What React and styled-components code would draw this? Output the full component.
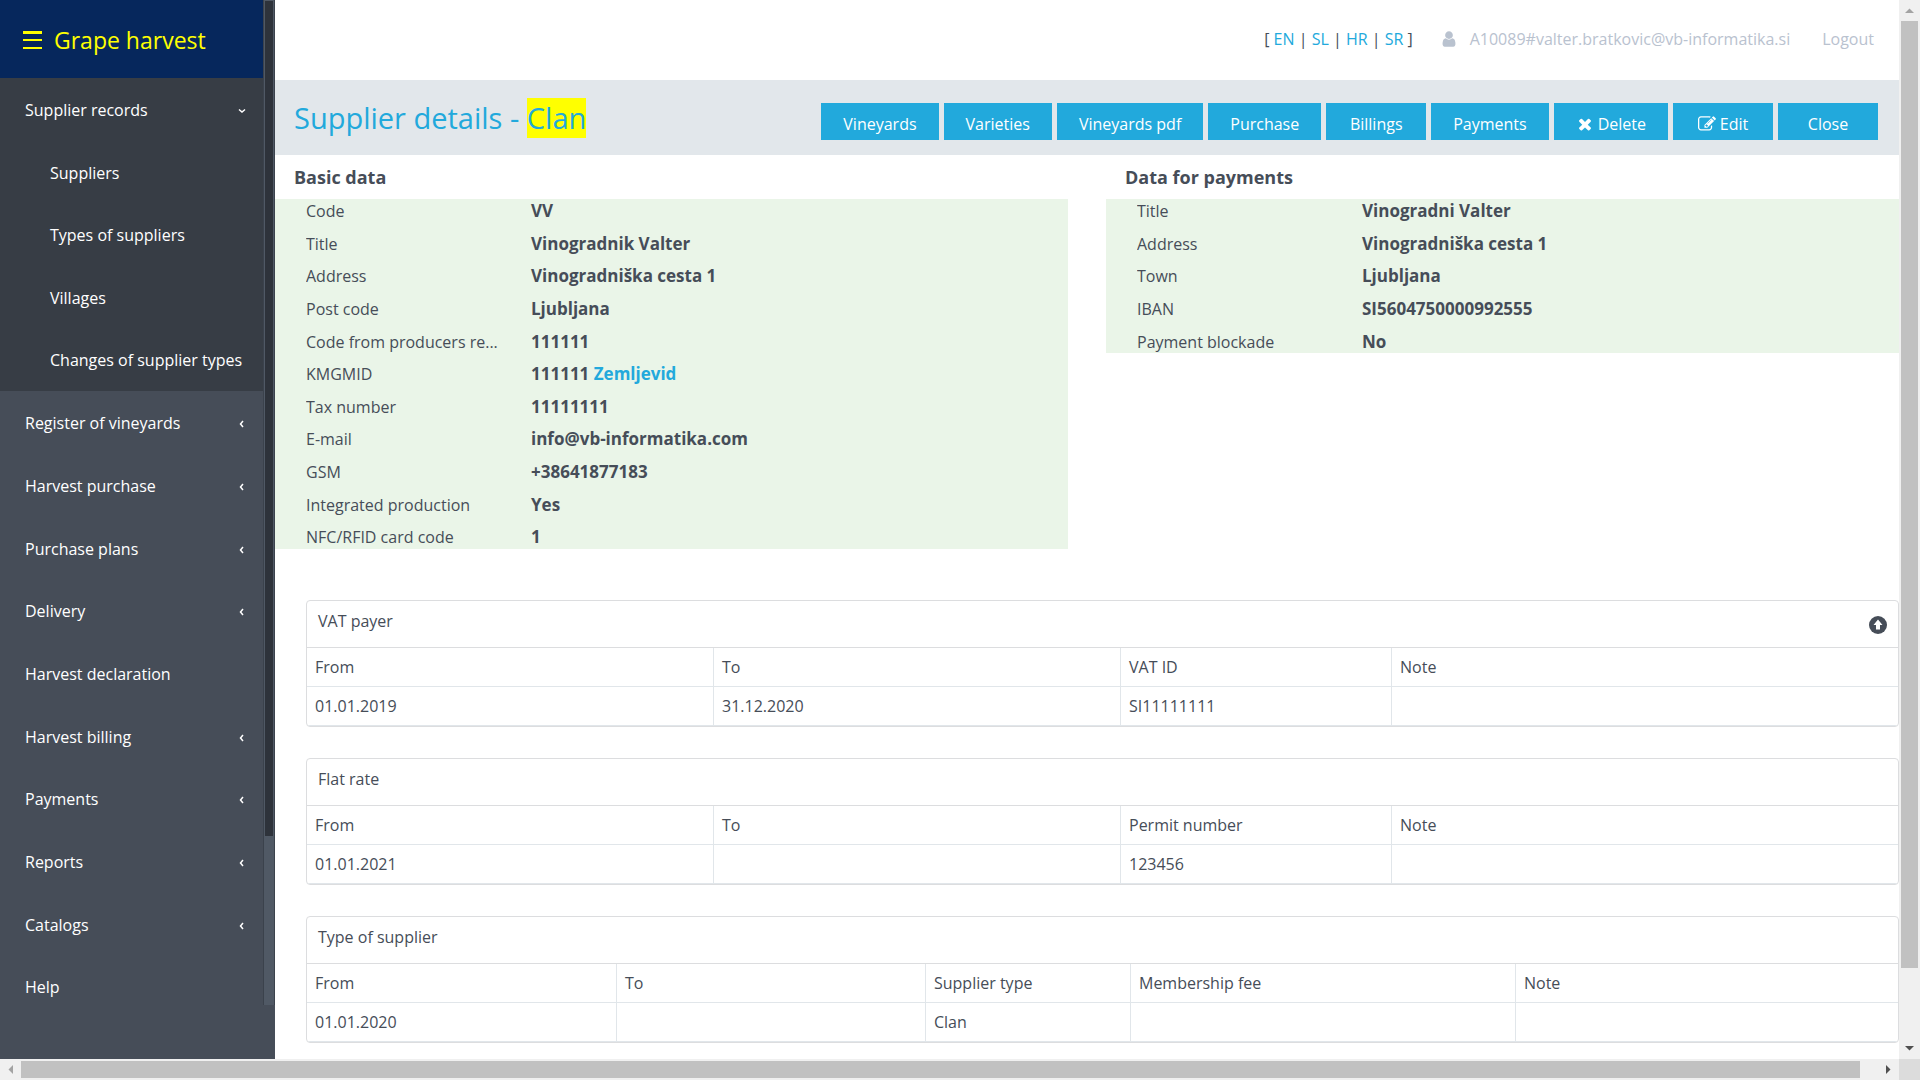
import React from "react";
import styled, { createGlobalStyle } from "styled-components";

const GlobalStyle = createGlobalStyle`
  *, *::before, *::after { box-sizing: border-box; }
  body {
    margin: 0;
    background: #fff;
    color: #464d58;
    font-family: "Open Sans", "Noto Sans", sans-serif;
    font-size: 16px;
    line-height: 24px;
  }
  a { text-decoration: none; }
`;

/* ---------- window frame ---------- */

const Window = styled.div`
  display: grid;
  grid-template-columns: minmax(0, 1fr) 21px;
  grid-template-rows: minmax(0, 1fr) 21px;
  height: 100vh;
  overflow: hidden;
`;

const Page = styled.div`
  display: flex;
  min-width: 0;
  overflow: hidden;
`;

const ScrollTrack = styled.div`
  display: flex;
  flex-direction: ${(p) => (p.$vertical ? "column" : "row")};
  align-items: center;
  background: #f0f0f0;
`;

const ScrollArrow = styled.span`
  display: flex;
  flex: 0 0 21px;
  align-items: center;
  justify-content: center;
`;

const ScrollThumb = styled.div`
  flex: ${(p) => p.$grow} 0 0;
  align-self: stretch;
  margin: ${(p) => (p.$vertical ? "0 2px" : "2px 0")};
  background: #c1c1c1;
`;

const ScrollRest = styled.div`
  flex: ${(p) => p.$grow} 0 0;
`;

const Corner = styled.div`
  background: #dcdcdc;
`;

/* ---------- sidebar ---------- */

const Sidebar = styled.aside`
  display: flex;
  flex: 0 0 275px;
  background: #464d58;
`;

const SidebarBody = styled.div`
  flex: 1;
`;

const Brand = styled.div`
  display: flex;
  align-items: center;
  gap: 12px;
  height: 78px;
  padding: 2px 0 0 23px;
  background: #06275c;
  color: #ffff00;
  font-size: 23px;
  line-height: 32px;
`;

const MenuButton = styled.button`
  display: flex;
  padding: 0;
  border: 0;
  background: none;
  color: inherit;
`;

const Menu = styled.ul`
  display: flex;
  flex-direction: column;
  min-height: 940px;
  margin: 0;
  padding: 0;
  list-style: none;
`;

const MenuItem = styled.li`
  display: flex;
  flex-direction: column;
  flex: ${(p) => p.$rows || 1} 0 0;
  background: ${(p) => (p.$open ? "#373d45" : "transparent")};
`;

const SubMenu = styled.ul`
  display: flex;
  flex-direction: column;
  flex: 4 0 0;
  margin: 0;
  padding: 0;
  list-style: none;
`;

const MenuLink = styled.a`
  display: flex;
  flex: 1 0 0;
  align-items: center;
  justify-content: space-between;
  padding: ${(p) => (p.$nested ? "0 0 0 50px" : "1px 16px 0 25px")};
  color: #fff;
  white-space: nowrap;
`;

const SideTrack = styled.div`
  flex: 0 0 12px;
  height: 1005px;
  padding: 1px 1px 0;
  border-left: 1px solid #3b424c;
  border-right: 1px solid #3b424c;
  background: #505965;
`;

const SideThumb = styled.div`
  height: 835px;
  background: #2e333b;
`;

/* ---------- main ---------- */

const Main = styled.main`
  flex: 1;
  min-width: 0;
`;

const TopBar = styled.header`
  display: flex;
  align-items: center;
  justify-content: flex-end;
  height: 80px;
  padding: 0 25px 2px 0;
`;

const Languages = styled.nav`
  margin-right: 27px;
  a { color: #22a9dc; }
`;

const User = styled.span`
  display: flex;
  align-items: center;
  gap: 12px;
  margin-right: 32px;
  color: #b9c2cf;
`;

const Logout = styled.a`
  color: #b9c2cf;
`;

const TitleBar = styled.div`
  display: flex;
  align-items: center;
  justify-content: space-between;
  height: 75px;
  padding: 0 21px 0 19px;
  background: #e2e7eb;
`;

const Title = styled.h1`
  margin: 0;
  color: #22a9dc;
  font-size: 29px;
  font-weight: 400;
  line-height: 40px;
  mark {
    display: inline-block;
    background: #ffff00;
    color: inherit;
  }
`;

const Actions = styled.div`
  display: flex;
  gap: 5px;
  padding-top: 8px;
`;

const Action = styled.button`
  display: flex;
  align-items: center;
  justify-content: center;
  gap: 4px;
  min-width: 100px;
  height: 37px;
  padding: 4px 22px 0;
  border: 0;
  background: #22a9dc;
  color: #fff;
  font: inherit;
`;

const Panels = styled.div`
  display: grid;
  grid-template-columns: 1fr 1fr;
  column-gap: 38px;
  align-items: start;
`;

const PanelTitle = styled.h2`
  margin: 0;
  padding: 10px 19px;
  font-size: 18px;
  line-height: 24px;
`;

const DataList = styled.dl`
  display: flex;
  flex-direction: column;
  gap: 9px;
  margin: 0;
  padding: 0 0 0 31px;
  background: #eaf5e8;
  font-size: 17px;
  line-height: 1.39;
`;

const DataRow = styled.div`
  display: grid;
  grid-template-columns: 225px 1fr;
  align-items: baseline;
`;

const Term = styled.dt`
  overflow: hidden;
  font-size: 16px;
  white-space: nowrap;
`;

const Value = styled.dd`
  margin: 0;
  font-weight: 700;
  a { color: #22a9dc; }
`;

const Cards = styled.div`
  display: flex;
  flex-direction: column;
  gap: 31px;
  padding: 51px 0 0 31px;
`;

const Card = styled.section`
  overflow: hidden;
  border: 1px solid #dcdddf;
  border-radius: 4px;
`;

const CardHead = styled.header`
  display: flex;
  align-items: center;
  justify-content: space-between;
  height: 47px;
  padding: 0 11px;
  border-bottom: 1px solid #dcdddf;
`;

const CardTitle = styled.h3`
  margin: 0;
  padding-bottom: 6px;
  font-size: 16px;
  font-weight: 400;
`;

const IconButton = styled.button`
  display: flex;
  padding: 2px 0 0;
  border: 0;
  background: none;
  color: inherit;
`;

const Table = styled.table`
  width: 100%;
  table-layout: fixed;
  border-collapse: separate;
  border-spacing: 0;
`;

const cell = `
  height: 39px;
  padding: 0 8px;
  border-bottom: 1px solid #e1e6ea;
  font-weight: 400;
  text-align: left;
  &:not(:last-child) { border-right: 1px solid #e1e6ea; }
`;

const HeadCell = styled.th`
  width: ${(p) => p.$share}%;
  ${cell}
`;

const Cell = styled.td`
  ${cell}
`;

/* ---------- icons ---------- */

const Glyph = ({ size, d }) => (
  <svg width={size} height={size} viewBox="0 0 1792 1792" fill="currentColor" aria-hidden="true">
    <path d={d} />
  </svg>
);

const USER =
  "M1536 1399q0 109-62.5 187t-150.5 78h-854q-88 0-150.5-78t-62.5-187q0-85 8.5-160.5t31.5-152 58.5-131 94-89 134.5-34.5q131 128 313 128t313-128q76 0 134.5 34.5t94 89 58.5 131 31.5 152 8.5 160.5zm-256-887q0 159-112.5 271.5t-271.5 112.5-271.5-112.5-112.5-271.5 112.5-271.5 271.5-112.5 271.5 112.5 112.5 271.5z";
const TIMES =
  "M1490 1322q0 40-28 68l-136 136q-28 28-68 28t-68-28l-294-294-294 294q-28 28-68 28t-68-28l-136-136q-28-28-28-68t28-68l294-294-294-294q-28-28-28-68t28-68l136-136q28-28 68-28t68 28l294 294 294-294q28-28 68-28t68 28l136 136q28 28 28 68t-28 68l-294 294 294 294q28 28 28 68z";
const EDIT =
  "M888 1184l116-116-152-152-116 116v56h96v96h56zm440-720q-16-16-33 1l-350 350q-17 17-1 33t33-1l350-350q17-17 1-33zm80 594v190q0 119-84.5 203.5t-203.5 84.5h-832q-119 0-203.5-84.5t-84.5-203.5v-832q0-119 84.5-203.5t203.5-84.5h832q63 0 117 25 15 7 18 23 3 17-9 29l-49 49q-14 14-32 8-23-6-45-6h-832q-66 0-113 47t-47 113v832q0 66 47 113t113 47h832q66 0 113-47t47-113v-126q0-13 9-22l64-64q15-15 35-7t20 29zm-96-738l288 288-672 672h-288v-288zm444 132l-92 92-288-288 92-92q28-28 68-28t68 28l152 152q28 28 28 68t-28 68z";

const CircleArrowUp = () => (
  <svg width="18" height="18" viewBox="0 0 18 18" aria-hidden="true">
    <circle cx="9" cy="9" r="9" fill="currentColor" />
    <path d="M9 3.500 13.500 9H11v4.500H7V9H4.500z" fill="#fff" />
  </svg>
);

const Bars = () => (
  <svg width="19" height="20" viewBox="0 0 19 20" fill="currentColor" aria-hidden="true">
    <path d="M0 1h19v3H0zM0 9h19v2H0zM0 17h19v2H0z" />
  </svg>
);

const Chevron = ({ open }) => (
  <svg width="10" height="10" viewBox="0 0 10 10" fill="none" stroke="#fff" strokeWidth="1.5" aria-hidden="true">
    <path d={open ? "M2 4.500 5 7l3-2.500" : "M6 3 3.500 6 6 9"} />
  </svg>
);

const Triangle = ({ direction, color }) => {
  const shapes = {
    up: "M0 7h9L4.500 2.500z",
    down: "M0 2h9L4.500 6.500z",
    left: "M7 0v9L2.500 4.500z",
    right: "M2 0v9l4.500-4.500z",
  };
  return (
    <svg width="9" height="9" viewBox="0 0 9 9" fill={color} aria-hidden="true">
      <path d={shapes[direction]} />
    </svg>
  );
};

/* ---------- data ---------- */

const supplierPages = ["Suppliers", "Types of suppliers", "Villages", "Changes of supplier types"];

const menu = [
  { label: "Register of vineyards", more: true },
  { label: "Harvest purchase", more: true },
  { label: "Purchase plans", more: true },
  { label: "Delivery", more: true },
  { label: "Harvest declaration" },
  { label: "Harvest billing", more: true },
  { label: "Payments", more: true },
  { label: "Reports", more: true },
  { label: "Catalogs", more: true },
  { label: "Help" },
];

const basicData = [
  ["Code", "VV"],
  ["Title", "Vinogradnik Valter"],
  ["Address", "Vinogradniška cesta 1"],
  ["Post code", "Ljubljana"],
  ["Code from producers re...", "111111"],
  ["KMGMID", <>111111 <a href="#map">Zemljevid</a></>],
  ["Tax number", "11111111"],
  ["E-mail", "info@vb-informatika.com"],
  ["GSM", "+38641877183"],
  ["Integrated production", "Yes"],
  ["NFC/RFID card code", "1"],
];

const paymentData = [
  ["Title", "Vinogradni Valter"],
  ["Address", "Vinogradniška cesta 1"],
  ["Town", "Ljubljana"],
  ["IBAN", "SI5604750000992555"],
  ["Payment blockade", "No"],
];

const tables = [
  {
    title: "VAT payer",
    toTop: true,
    weights: [407, 407, 271, 506],
    head: ["From", "To", "VAT ID", "Note"],
    row: ["01.01.2019", "31.12.2020", "SI11111111", ""],
  },
  {
    title: "Flat rate",
    weights: [407, 407, 271, 506],
    head: ["From", "To", "Permit number", "Note"],
    row: ["01.01.2021", "", "123456", ""],
  },
  {
    title: "Type of supplier",
    weights: [310, 309, 205, 385, 382],
    head: ["From", "To", "Supplier type", "Membership fee", "Note"],
    row: ["01.01.2020", "", "Clan", "", ""],
  },
];

/* ---------- parts ---------- */

const Panel = ({ title, rows }) => (
  <section>
    <PanelTitle>{title}</PanelTitle>
    <DataList>
      {rows.map(([term, value]) => (
        <DataRow key={term}>
          <Term>{term}</Term>
          <Value>{value}</Value>
        </DataRow>
      ))}
    </DataList>
  </section>
);

const TableCard = ({ title, toTop, weights, head, row }) => {
  const total = weights.reduce((a, b) => a + b, 0);
  return (
    <Card>
      <CardHead>
        <CardTitle>{title}</CardTitle>
        {toTop && (
          <IconButton type="button" aria-label="Back to top">
            <CircleArrowUp />
          </IconButton>
        )}
      </CardHead>
      <Table>
        <thead>
          <tr>
            {head.map((h, i) => (
              <HeadCell key={h} $share={(weights[i] / total) * 100}>{h}</HeadCell>
            ))}
          </tr>
        </thead>
        <tbody>
          <tr>
            {row.map((c, i) => (
              <Cell key={head[i]}>{c}</Cell>
            ))}
          </tr>
        </tbody>
      </Table>
    </Card>
  );
};

export default function App() {
  return (
    <>
      <GlobalStyle />
      <Window>
        <Page>
          <Sidebar>
            <SidebarBody>
              <Brand>
                <MenuButton type="button" aria-label="Toggle menu">
                  <Bars />
                </MenuButton>
                <span>Grape harvest</span>
              </Brand>
              <Menu>
                <MenuItem $rows={5} $open>
                  <MenuLink href="#records">
                    Supplier records
                    <Chevron open />
                  </MenuLink>
                  <SubMenu>
                    {supplierPages.map((label) => (
                      <MenuItem key={label}>
                        <MenuLink href="#page" $nested>{label}</MenuLink>
                      </MenuItem>
                    ))}
                  </SubMenu>
                </MenuItem>
                {menu.map(({ label, more }) => (
                  <MenuItem key={label}>
                    <MenuLink href="#page">
                      {label}
                      {more && <Chevron />}
                    </MenuLink>
                  </MenuItem>
                ))}
              </Menu>
            </SidebarBody>
            <SideTrack>
              <SideThumb />
            </SideTrack>
          </Sidebar>
          <Main>
            <TopBar>
              <Languages>
                [ <a href="#en">EN</a> | <a href="#sl">SL</a> | <a href="#hr">HR</a> | <a href="#sr">SR</a> ]
              </Languages>
              <User>
                <Glyph size={18} d={USER} />
                A10089#valter.bratkovic@vb-informatika.si
              </User>
              <Logout href="#logout">Logout</Logout>
            </TopBar>
            <TitleBar>
              <Title>
                Supplier details - <mark>Clan</mark>
              </Title>
              <Actions>
                <Action type="button">Vineyards</Action>
                <Action type="button">Varieties</Action>
                <Action type="button">Vineyards pdf</Action>
                <Action type="button">Purchase</Action>
                <Action type="button">Billings</Action>
                <Action type="button">Payments</Action>
                <Action type="button"><Glyph size={18} d={TIMES} />Delete</Action>
                <Action type="button"><Glyph size={18} d={EDIT} />Edit</Action>
                <Action type="button">Close</Action>
              </Actions>
            </TitleBar>
            <Panels>
              <Panel title="Basic data" rows={basicData} />
              <Panel title="Data for payments" rows={paymentData} />
            </Panels>
            <Cards>
              {tables.map((t) => (
                <TableCard key={t.title} {...t} />
              ))}
            </Cards>
          </Main>
        </Page>
        <ScrollTrack $vertical>
          <ScrollArrow><Triangle direction="up" color="#a3a3a3" /></ScrollArrow>
          <ScrollThumb $vertical $grow={947} />
          <ScrollRest $grow={70} />
          <ScrollArrow><Triangle direction="down" color="#505050" /></ScrollArrow>
        </ScrollTrack>
        <ScrollTrack>
          <ScrollArrow><Triangle direction="left" color="#a3a3a3" /></ScrollArrow>
          <ScrollThumb $grow={1839} />
          <ScrollRest $grow={18} />
          <ScrollArrow><Triangle direction="right" color="#505050" /></ScrollArrow>
        </ScrollTrack>
        <Corner />
      </Window>
    </>
  );
}
